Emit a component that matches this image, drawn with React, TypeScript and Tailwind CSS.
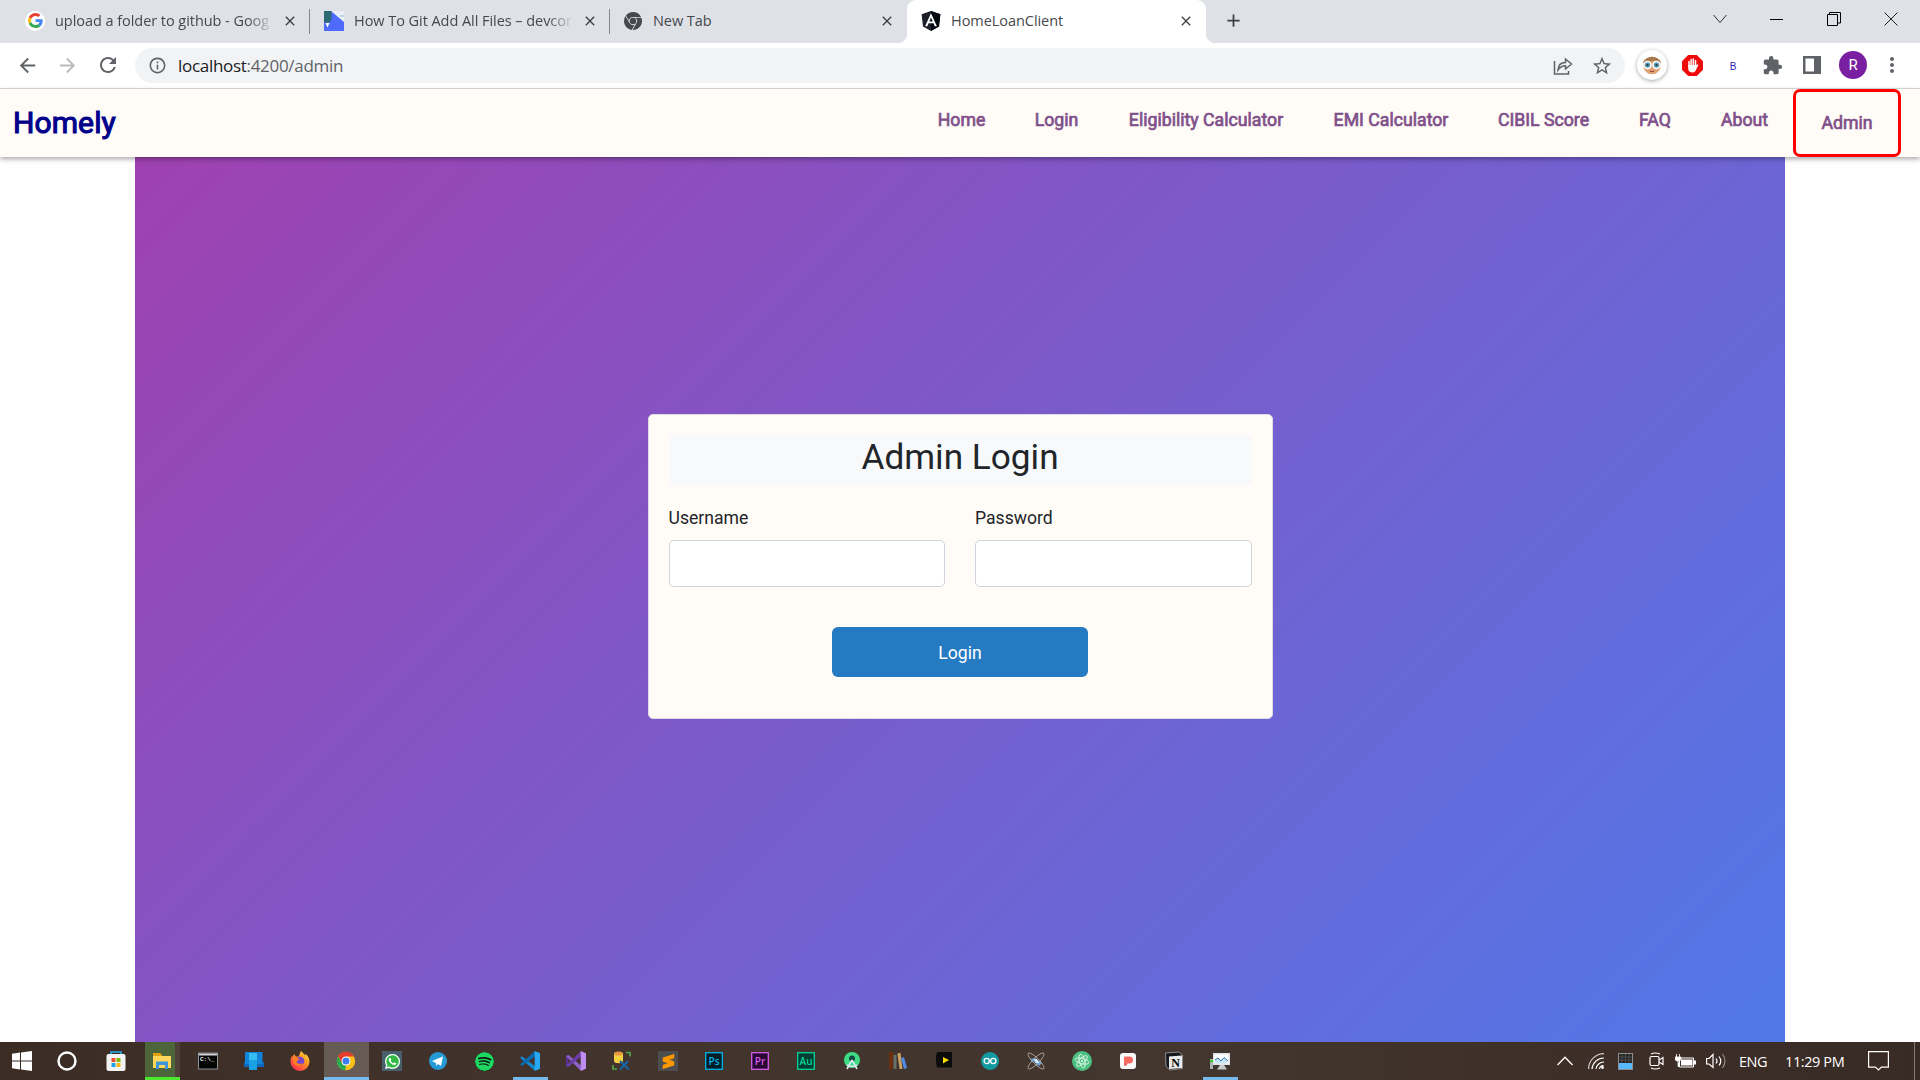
import React from "react";
import { SiGooglechrome, SiWhatsapp, SiSpotify, SiSublimetext } from "react-icons/si";
import { MdExtension, MdStarBorder, MdRefresh, MdArrowBack, MdArrowForward, MdOutlineInfo, MdMoreVert, MdAdd, MdClose } from "react-icons/md";

const OpenSans = "[font-family:'Open_Sans','Noto_Sans',sans-serif]";

function GoogleG() {
  return (
    <svg viewBox="0 0 48 48" className="h-[15px] w-[15px]">
      <path fill="#EA4335" d="M24 9.5c3.54 0 6.71 1.22 9.21 3.6l6.85-6.85C35.9 2.38 30.47 0 24 0 14.62 0 6.51 5.38 2.56 13.22l7.98 6.19C12.43 13.72 17.74 9.5 24 9.5z" />
      <path fill="#4285F4" d="M46.98 24.55c0-1.57-.15-3.09-.38-4.55H24v9.02h12.94c-.58 2.96-2.26 5.48-4.78 7.18l7.73 6c4.51-4.18 7.09-10.36 7.09-17.65z" />
      <path fill="#FBBC05" d="M10.53 28.59c-.48-1.45-.76-2.99-.76-4.59s.27-3.14.76-4.59l-7.98-6.19C.92 16.46 0 20.12 0 24c0 3.88.92 7.54 2.56 10.78l7.97-6.19z" />
      <path fill="#34A853" d="M24 48c6.48 0 11.93-2.13 15.89-5.81l-7.73-6c-2.15 1.45-4.92 2.3-8.16 2.3-6.26 0-11.57-4.22-13.47-9.91l-7.98 6.19C6.51 42.62 14.62 48 24 48z" />
    </svg>
  );
}

function DevIcon() {
  return (
    <svg viewBox="0 0 20 20" className="h-5 w-5">
      <rect width="20" height="20" fill="#4f6bff" />
      <path d="M7 0H20V11Z" fill="#eaf0f6" />
      <path d="M0 0H7.500V9L5.500 11.500H0Z" fill="#2d6a73" />
      <path d="M1.500 12h4L3.500 16.500Z" fill="#fff" />
      <path d="M15 4h5v2h-3z" fill="#b9d8dc" />
    </svg>
  );
}

function AngularIcon() {
  return (
    <svg viewBox="0 0 20 20" className="h-5 w-5">
      <path d="M10 0L19.400 3.300 18 15.500 10 20 2 15.500.6 3.300Z" fill="#1d2029" />
      <path d="M10 0L19.400 3.300 18 15.500 10 20Z" fill="#050810" />
      <path fillRule="evenodd" d="M10 2.300L15.900 15.300h-2.200l-1.200-3H7.500l-1.200 3H4.100ZM10 6.400L8.300 10.500h3.400Z" fill="#fff" />
    </svg>
  );
}

function Tab({ icon, label, sep, width, fade }: { icon: React.ReactNode; label: string; sep?: boolean; width: string; fade?: boolean }) {
  return (
    <div className={`relative flex h-[41px] items-center pr-[12px] ${width}`}>
      <div className="flex w-5 shrink-0 justify-center">{icon}</div>
      <div className={`ml-[10px] mr-[8px] flex-1 whitespace-nowrap pt-px text-[14.500px] leading-5 tracking-[-0.050px] text-[#45494d] ${fade ? "[mask-image:linear-gradient(to_right,#000_88%,transparent)]" : ""}`}>{label}</div>
      <MdClose className="h-4 w-4 shrink-0 text-[#3c4043]" />
      {sep && <div className="absolute right-0 top-[9px] h-[25px] w-px bg-[#85888d]" />}
    </div>
  );
}

function TabStrip() {
  return (
    <div className={`flex h-[43px] bg-[#dee1e6] ${OpenSans}`}>
      <div className="flex pl-[10px]">
        <Tab width="w-[300px] pl-[15px]" sep fade icon={<div className="flex h-5 w-5 shrink-0 items-center justify-center rounded-full bg-white"><GoogleG /></div>} label="upload a folder to github - Goog" />
        <Tab width="w-[300px] pl-[14px]" sep fade icon={<DevIcon />} label="How To Git Add All Files – devcor" />
        <Tab width="w-[297px] pl-[13px]" icon={<SiGooglechrome className="h-[18px] w-[18px] text-[#45494d]" />} label="New Tab" />
      </div>
      <div className="relative h-[43px] w-[299px] rounded-t-[9px] bg-white">
        <div className="absolute -left-[9px] bottom-0 h-[9px] w-[9px] bg-[radial-gradient(circle_at_0_0,#dee1e6_9px,#fff_9px)]" />
        <div className="absolute -right-[9px] bottom-0 h-[9px] w-[9px] bg-[radial-gradient(circle_at_100%_0,#dee1e6_9px,#fff_9px)]" />
        <Tab width="w-[299px] pl-[14px]" icon={<AngularIcon />} label="HomeLoanClient" />
      </div>
      <div className="flex h-[41px] flex-1 items-center pl-[17px]">
        <MdAdd className="h-[21px] w-[21px] text-[#3c4043]" />
      </div>
      <div className="flex h-[38px] items-center text-black">
        <div className="flex w-[57px] justify-center"><svg className="h-[10px] w-[14px]" viewBox="0 0 14 10" fill="none" stroke="#333"><path d="M.5 1l6.500 7.500L13.500 1" /></svg></div>
        <div className="flex w-[57px] justify-center"><div className="h-px w-[13px] bg-black" /></div>
        <div className="flex w-[57px] justify-center"><svg className="h-[14px] w-[14px]" viewBox="0 0 14 14" fill="none" stroke="#000"><path d="M.5 2.500h10v11H.5zM2.500 2.500V.5h11v10.500h-3" /></svg></div>
        <div className="flex w-[58px] justify-center"><svg className="h-[14px] w-[14px]" viewBox="0 0 14 14" fill="none" stroke="#222"><path d="M.5.5l13 13M13.500.5l-13 13" /></svg></div>
      </div>
    </div>
  );
}

function Toolbar() {
  return (
    <div className={`flex h-[46px] items-center border-b border-[#dadce0] bg-white pb-px text-[#5f6368] ${OpenSans}`}>
      <div className="flex w-[135px] items-center pl-4">
        <MdArrowBack className="h-[23px] w-[23px]" />
        <MdArrowForward className="ml-[17px] h-[23px] w-[23px] text-[#babcbe]" />
        <MdRefresh className="ml-[17px] h-6 w-6" />
      </div>
      <div className="mt-px flex h-[35px] w-[1490px] items-center rounded-full bg-[#f1f3f4] pl-[13px] pr-[12px]">
        <MdOutlineInfo className="h-[19px] w-[19px]" />
        <div className="ml-[11px] flex-1 text-[17px] leading-6 tracking-[-0.300px]"><span className="text-[#202124]">localhost</span>:4200/admin</div>
        <svg className="mr-[18px] h-[20px] w-[20px]" viewBox="0 0 20 20" fill="none" stroke="#5f6368" strokeWidth="1.500"><path d="M1.500 5v13h14v-3M5 14c.3-5 3-7.500 7.500-7.500V3l6 5-6 5V9.800C9 9.800 7 11 5 14z" /></svg>
        <MdStarBorder className="h-[22px] w-[22px]" />
      </div>
      <div className="ml-[12px] flex h-[30px] w-[30px] items-center justify-center rounded-full bg-white shadow-[0_1px_4px_rgba(0,0,0,.35)]">
        <svg className="h-[20px] w-[20px]" viewBox="0 0 20 20">
          <circle cx="10" cy="10.500" r="8.800" fill="#dfa477" />
          <path d="M1 8a9.200 8 0 0 1 18 0L13 5.500 5 7.500z" fill="#a5794c" />
          <circle cx="5.500" cy="10" r="3.500" fill="#5f9fb3" stroke="#fff" strokeWidth="1.500" />
          <circle cx="14.500" cy="10" r="3.500" fill="#5f9fb3" stroke="#fff" strokeWidth="1.500" />
          <circle cx="5.500" cy="10" r="1.200" fill="#27404a" /><circle cx="14.500" cy="10" r="1.200" fill="#27404a" />
          <path d="M8 16q2 1 4 0" stroke="#a14c39" strokeWidth="1.200" fill="none" />
        </svg>
      </div>
      <svg className="ml-[15px] h-[21px] w-[21px]" viewBox="0 0 21 21">
        <path d="M6.200 0h8.600L21 6.200v8.600L14.800 21H6.200L0 14.800V6.200z" fill="#ed0b0b" />
        <path d="M7 6.500v5M9.100 4.500v7M11.300 4v7M13.500 5.500V12" stroke="#fff" strokeWidth="1.500" strokeLinecap="round" />
        <path d="M6.250 10h8l1.500-.8q.8.200.3 1.200l-2.300 5.100q-1 2-3 2-3.700 0-4.500-3z" fill="#fff" />
      </svg>
      <div className="ml-[14px] mt-[3px] w-[32px] text-center text-[10px] leading-4 text-[#2a22b8] [font-family:'Liberation_Sans',sans-serif]">B</div>
      <MdExtension className="ml-[13px] h-[21px] w-[21px]" />
      <svg className="ml-[20px] h-[18px] w-[18px]" viewBox="0 0 18 18"><path fillRule="evenodd" d="M0 0h18v18H0zM2.500 2.500v13H11v-13z" fill="#5f6368" /></svg>
      <div className="ml-[18px] flex h-7 w-7 items-center justify-center rounded-full bg-[#7b1fa2] text-[15px] text-white [font-family:Roboto,sans-serif]">R</div>
      <MdMoreVert className="ml-[13px] h-6 w-6" />
    </div>
  );
}

const links = [
  ["Home", "w-[97px]"], ["Login", "w-[93px]"], ["Eligibility Calculator", "w-[206px]"], ["EMI Calculator", "w-[164px]"],
  ["CIBIL Score", "w-[141px]"], ["FAQ", "w-[82px]"], ["About", "w-[97px]"],
];

function NavBar() {
  return (
    <div className="relative z-10 flex h-[68px] bg-[#fffbf6] shadow-[0_2px_5px_rgba(0,0,0,.35)]">
      <div className="flex-1 pl-[13px] pt-[14px] text-[30px] leading-[40px] tracking-[.1px] text-[#00008b] [-webkit-text-stroke:1.100px_#00008b]">Homely</div>
      <nav className="flex text-[17.700px] leading-6 text-[#80508a] [-webkit-text-stroke:.7px_#80508a]">
        {links.map(([t, w]) => (
          <div key={t} className={`whitespace-nowrap pt-[19px] text-center ${w}`}>{t}</div>
        ))}
        <div className="mr-[19px] h-[68px] w-[108px] rounded-[7px] border-[3px] border-[#ff0000] pt-[19px] text-center">Admin</div>
      </nav>
    </div>
  );
}

function Field({ label, type }: { label: string; type: string }) {
  return (
    <label className="flex flex-1 flex-col">
      <span className="pt-px text-[17.600px] leading-[27px]">{label}</span>
      <input type={type} className="mt-[8px] h-[47px] w-full rounded-[5px] border border-[#ced4da] bg-white" />
    </label>
  );
}

function LoginCard() {
  return (
    <div className="h-[305px] w-[625px] rounded-[5px] border border-[#dfdbe4] bg-[#fffbf6] px-5 pt-5 text-[#212529]">
      <h2 className="h-[50px] bg-[#f8f9fa] text-center text-[35.200px] leading-[44px]">Admin Login</h2>
      <div className="mt-[19px] flex gap-[30px]">
        <Field label="Username" type="text" />
        <Field label="Password" type="password" />
      </div>
      <button className="mx-auto mt-10 block h-[50px] w-[256px] rounded-[6px] bg-[#267ac1] pt-[2px] text-[17.600px] text-white">Login</button>
    </div>
  );
}

function Adobe({ t, c, b }: { t: string; c: string; b: string }) {
  return (
    <svg viewBox="0 0 18 18" className="h-[18px] w-[18px]">
      <rect x=".7" y=".7" width="16.600" height="16.600" fill={b} stroke={c} strokeWidth="1.300" />
      <text x="9" y="12.500" textAnchor="middle" fontSize="10" fontFamily="Open Sans" fontWeight="600" fill={c}>{t}</text>
    </svg>
  );
}

const S = ({ children, size = "h-5 w-5" }: { children: React.ReactNode; size?: string }) => <svg viewBox="0 0 20 20" className={size}>{children}</svg>;

const apps: { icon: React.ReactNode; cls?: string }[] = [
  { icon: <S><path d="M0 2.800L8 1.600V9.500H0zM9 1.500L20 0V9.500H9zM0 10.500h8v7.900L0 17.200zM9 10.500h11V20L9 18.500z" fill="#fff" /></S> },
  { icon: <S><circle cx="10" cy="10" r="8.500" fill="none" stroke="#fff" strokeWidth="2.400" /></S> },
  { icon: <S><path d="M5 4V1h10v3" fill="none" stroke="#29b0ef" strokeWidth="1.500" /><rect x=".5" y="3" width="19" height="17" rx="2" fill="#f3f3f3" /><path d="M5.500 7H9.500v4h-4z" fill="#e8502a" /><path d="M10.500 7h4v4h-4z" fill="#7db900" /><path d="M5.500 12h4v4h-4z" fill="#1ba1e8" /><path d="M10.500 12h4v4h-4z" fill="#fdb813" /></S> },
  { icon: <S><path d="M1 2h7l2 2v3H1z" fill="#e0a00c" /><path d="M1 5h18v12H1z" fill="#ffd65c" /><path d="M4 18v-7.500h12V18h-3v-4H7v4z" fill="#3c96dc" /></S>, cls: "file" },
  { icon: <S><rect x=".5" y="2" width="19" height="16" fill="#050505" stroke="#8f9296" /><path d="M1 2.500h18v2H1z" fill="#d5d7d9" /><text x="2" y="10" fontSize="6" fontFamily="Liberation Mono" fontWeight="700" fill="#eee">C:\_</text></S> },
  { icon: <S><path d="M0 11h20v5H0z" fill="#0b68bd" /><path d="M1 1h17.500v12H1z" fill="#1183d9" /><path d="M5 2h8v17H5z" fill="#1ba0e6" /><path d="M5 2h8v7H5z" fill="#35bdf2" /></S> },
  { icon: <S><defs><linearGradient id="ff" x1="1" y1="0" x2=".2" y2="1"><stop stopColor="#fff04a" /><stop offset=".45" stopColor="#ff9320" /><stop offset="1" stopColor="#ff2455" /></linearGradient></defs><path d="M11 0c2 2 3 3 4.500 4.500V2.500c3 3 4 5.500 4 8.500a9.500 9 0 0 1-19 0c0-3 .5-5 2-6.500v1.500L4 3l2 2.500h3C9.500 3 10 1.500 11 0z" fill="url(#ff)" /><circle cx="10" cy="10" r="4.300" fill="#7745c9" /><path d="M3 7c3-1 5 0 7 1.500-2 .2-2.500 1-3.500 2.500 1 2 4 2.500 6 1-1 4-7 4-9 0z" fill="#ff8023" /></S> },
  { icon: <S><circle cx="10" cy="10" r="9.200" fill="#fbc116" /><path d="M2 5.300A9.200 9.200 0 0 1 18 5.400H10L6 12.500z" fill="#e33b2e" /><path d="M2 5.300L6.200 12.500 10 14.500 9.200 19.200A9.200 9.200 0 0 1 2 5.300z" fill="#2da94f" /><circle cx="10" cy="10" r="4.500" fill="#fff" /><circle cx="10" cy="10" r="3.500" fill="#3b7ded" /></S>, cls: "chrome" },
  { icon: <div className="flex h-5 w-5 items-center justify-center bg-[#47606b]"><div className="flex h-[15px] w-[15px] items-center justify-center rounded-full bg-[#2fb944]"><SiWhatsapp className="h-[15px] w-[15px] text-white" /></div></div> },
  { icon: <S><circle cx="10" cy="10" r="9" fill="#249bd7" /><path d="M4 10l11-4.500-2 9.500-3-2-2 1.700V12z" fill="#fff" /></S> },
  { icon: <SiSpotify className="h-[19px] w-[19px] rounded-full bg-[#101713] text-[#1ed760]" /> },
  { icon: <S><path d="M0 6.700L1.800 5.200 15 15V20z" fill="#1486d0" /><path d="M15 0V5.500L1.800 15 0 13.500z" fill="#0a6bb0" /><path d="M14.700 0L20 2.200v15.600L14.700 20z" fill="#28a8f0" /></S>, cls: "code" },
  { icon: <S><path d="M0 5l2.500-1v12L0 15z" fill="#593097" /><path d="M0 5l2.500-1L15 14.500V20z" fill="#8e62c9" /><path d="M15 0v5.500L2.500 16 0 15z" fill="#6b3ca8" /><path d="M14.700 0L20 2.200v15.600L14.700 20z" fill="#bd8df0" /></S> },
  { icon: <S><path d="M2 2v8c0 3 9 3 9 0V2z" fill="#f5cf42" /><ellipse cx="6.500" cy="2.500" rx="4.500" ry="2" fill="#e9963e" /><path d="M14 1.500h4v4M1 14v4h4" stroke="#50a648" strokeWidth="1.700" fill="none" /><path d="M8 10l9 8.500M16 10l-8 8.500" stroke="#1764a7" strokeWidth="2.200" /></S> },
  { icon: <div className="flex h-5 w-5 items-center justify-center bg-[#4b4d4f]"><SiSublimetext className="h-[15px] w-[15px] text-[#ff9800]" /></div> },
  { icon: <Adobe t="Ps" c="#00b5e6" b="#001d2a" /> },
  { icon: <Adobe t="Pr" c="#d65de8" b="#2a0634" /> },
  { icon: <Adobe t="Au" c="#00d69a" b="#003d32" /> },
  { icon: <S><circle cx="10" cy="9" r="8" fill="#3ddc84" /><circle cx="10" cy="7.500" r="3" fill="#164a40" /><path d="M10 9L5 18M10 9l5 9M5 14q5 3 10 0" stroke="#dce9f2" strokeWidth="1.600" fill="none" /></S> },
  { icon: <S><path d="M1 1h4v17H1z" fill="#6d2e0d" /><path d="M5.500 4h3v14h-3z" fill="#65716a" /><path d="M9.500 2.500l3-.7L14.500 18h-3z" fill="#c8a267" /><path d="M13 7l3-.7L19 17l-3 1z" fill="#4f8ee4" /></S> },
  { icon: <S><path d="M3 1h15v15.500H3L2 12V5z" fill="#0c0c0c" /><path d="M9 6l6 3-6 3.500z" fill="#f2dc00" /></S> },
  { icon: <S><circle cx="10" cy="10" r="9" fill="#149ba1" /><g fill="none" stroke="#fff" strokeWidth="1.300"><circle cx="6.700" cy="10" r="2.600" /><circle cx="13.300" cy="10" r="2.600" /></g></S> },
  { icon: <S><g fill="none" stroke="#a8a397" strokeWidth=".9"><ellipse cx="10" cy="10" rx="11" ry="3" transform="rotate(45 10 10)" /><ellipse cx="10" cy="10" rx="11" ry="3" transform="rotate(-45 10 10)" /></g><path d="M4 8l5-1 7 5-3 3z" fill="#78a7d3" /><path d="M8 8l3 0 2 4-3 0z" fill="#dcecf9" /></S> },
  { icon: <S><circle cx="10" cy="10" r="10" fill="#4bc080" /><g fill="none" stroke="#dff7e6" strokeWidth=".9"><ellipse cx="10" cy="10" rx="7" ry="2.700" transform="rotate(15 10 10)" /><ellipse cx="10" cy="10" rx="7" ry="2.700" transform="rotate(75 10 10)" /><ellipse cx="10" cy="10" rx="7" ry="2.700" transform="rotate(135 10 10)" /></g><circle cx="10" cy="10" r="1" fill="#fff" /></S> },
  { icon: <S><rect x="2" y="2" width="16" height="16" rx="3" fill="#fafafa" /><path d="M7 5.500h4.500a3.500 3.500 0 0 1 0 7H9.500q-.5 2.500-2.500 2.500-1 0-1-1.500v-7q0-1 1-1z" fill="#f76a62" /></S> },
  { icon: <S><path d="M1.500 2L15 1l3.500 3v13.500l-13 1.500-3.500-4z" fill="#16181b" stroke="#cfcfcf" strokeWidth=".6" /><path d="M5 5.500l13-1V17L5 18z" fill="#e9eaeb" /><text x="11.500" y="15.800" textAnchor="middle" fontSize="12" fontFamily="Liberation Serif" fontWeight="700" fill="#000">N</text></S> },
  { icon: <S><path d="M0 8h3v10H0z" fill="#a9b3b1" /><path d="M0 9h3v2H0z" fill="#35ce2b" /><path d="M3 2h17v12H3z" fill="#e1e4e5" /><path d="M4.500 3.500h14v9h-14z" fill="#fff" /><path d="M5 9l3-2 3 3 3-3.500 3 3.500v2.500H5z" fill="#c7e3f5" /><path d="M5 9l3-2 3 3 3-3.500L18 10" stroke="#2075ad" fill="none" /><path d="M10 14h4l3 4.500H7z" fill="#c6cccd" /></S>, cls: "mon" },
];

function Taskbar() {
  return (
    <div className={`flex h-[38px] bg-[linear-gradient(90deg,#3b2c24,#42342c_30%,#42362f_62%,#3e3028_80%,#382a25)] text-white ${OpenSans}`}>
      <div className="flex">
        {apps.map((a, i) => (
          <div key={i} className={`relative flex h-[38px] items-center justify-center ${i === 0 ? "w-[44px]" : i === 1 ? "w-[46px]" : i === 2 ? "w-[51px]" : i === 3 ? "mr-[2px] w-[42px]" : "w-[46px]"}`}>
            {a.cls === "file" && <div className="absolute inset-y-0 left-[4px] flex w-[35px] border-b-[3px] border-[#4de931]"><div className="w-[30px] bg-[#4d653a]" /><div className="w-[5px] bg-[#4f4139]" /></div>}
            {a.cls === "chrome" && <div className="absolute inset-y-0 left-[1px] w-[45px] border-b-[3px] border-[#76b9ed] bg-[#665b55]" />}
            {(a.cls === "code" || a.cls === "mon") && <div className="absolute bottom-0 left-[6px] h-[3px] w-[35px] bg-[#76b9ed]" />}
            <div className="relative">{a.icon}</div>
          </div>
        ))}
      </div>
      <div className="ml-auto flex items-center">
        <svg className="h-[10px] w-[16px]" viewBox="0 0 16 10" fill="none" stroke="#fff" strokeWidth="1.300"><path d="M.5 9L8 1.200 15.500 9" /></svg>
        <svg className="ml-[15px] h-4 w-4" viewBox="0 0 16 16" fill="none" stroke="#fff" strokeWidth="1.200"><path d="M.6 16A15.400 15.400 0 0 1 16 .6" opacity=".75" /><path d="M4 16A12 12 0 0 1 16 5M8 16a8 8 0 0 1 8-7" /><path d="M11.500 16a4 4 0 0 1 4-3.500" /><circle cx="14.500" cy="14.500" r="1.400" fill="#fff" stroke="none" /></svg>
        <svg className="ml-[14px] h-[17px] w-[15px]" viewBox="0 0 15 17"><rect x=".5" y=".5" width="14" height="16" fill="#252525" stroke="#8b8d8e" /><path d="M4 1v9M7.500 1v9M11 1v9M1 4h13M1 7h13" stroke="#4d4d4d" /><path d="M1 10h13v6H1z" fill="#59bbff" /></svg>
        <svg className="ml-[16px] h-[18px] w-[15px]" viewBox="0 0 15 18" fill="none" stroke="#fff" strokeWidth="1.200"><rect x="1" y="4.500" width="9" height="9" rx="1.500" /><path d="M10 8l4-2.500v7L10 10M2 2q4-2 9 0M2 16q4 2 9 0" /></svg>
        <svg className="ml-[11px] h-[15px] w-[21px]" viewBox="0 0 21 15"><path d="M4.500 4h14v9H4.500z" fill="none" stroke="#fff" /><path d="M6 5.500h11.500v6H6zM19 6.500h2v4h-2z" fill="#fff" /><path d="M1.500 0v3M4.500 0v3M0 3h6v2.500Q5 7 3 7T0 5.500zM3 7v5.500h2" fill="#fff" stroke="#fff" strokeWidth=".8" /></svg>
        <svg className="ml-[10px] h-4 w-5" viewBox="0 0 20 16" fill="none" stroke="#fff" strokeWidth="1.200"><path d="M.6 5.500h2.500L7 1.500v13L3.100 11H.6zM10 5.500q2 2.500 0 5M13 3.500q3.500 4.500 0 9" /><path d="M16.500 1q5 7 0 14" opacity=".45" /></svg>
        <div className="ml-[13px] w-[29px] whitespace-nowrap pt-px text-[14.500px] leading-5 tracking-[-0.5px]">ENG</div>
        <div className="ml-[17px] w-[60px] whitespace-nowrap pt-px text-[14.500px] leading-5 tracking-[-0.400px]">11:29 PM</div>
        <svg className="ml-[23px] mr-[25px] h-5 w-[21px]" viewBox="0 0 21 20" fill="none" stroke="#fff" strokeWidth="1.200"><path d="M.6.600h19.800v15.500h-7L10.500 19l-3-2.900H.6z" /></svg>
        <div className="mr-[5px] h-[38px] w-px bg-[#85796f]" />
      </div>
    </div>
  );
}

export default function App() {
  return (
    <div className="flex h-[1080px] w-[1920px] flex-col overflow-hidden bg-white [font-family:Roboto,sans-serif]">
      <TabStrip />
      <Toolbar />
      <NavBar />
      <main className="mx-[135px] flex h-[885px] flex-col items-center bg-[linear-gradient(135deg,#9f41b0,#5178e8)] pt-[257px]">
        <LoginCard />
      </main>
      <Taskbar />
    </div>
  );
}
